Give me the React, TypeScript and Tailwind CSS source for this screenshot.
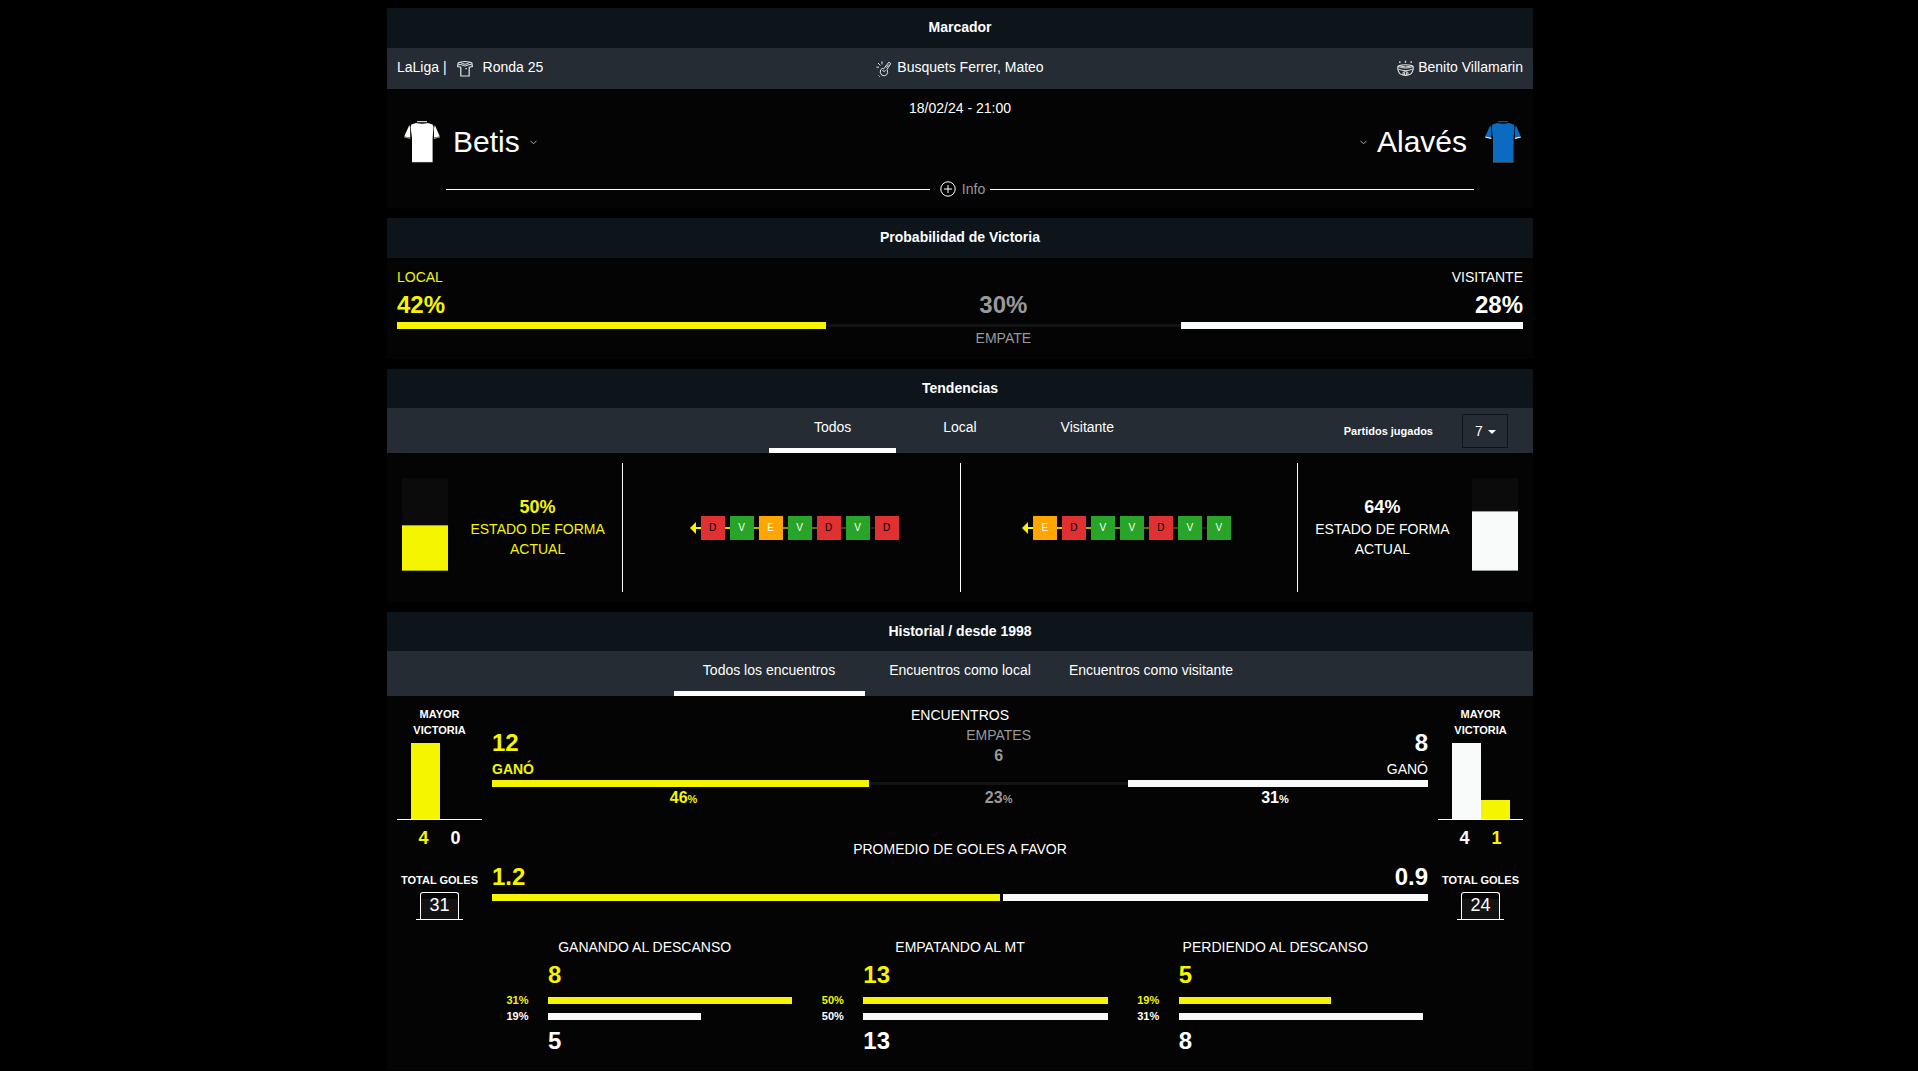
import { ReactNode, useState } from "react";

type Side = "home" | "away";

const homeForm = ["D", "V", "E", "V", "D", "V", "D"];
const awayForm = ["E", "D", "V", "V", "D", "V", "V"];

const formColors: Record<string, string> = {
    D: "bg-[#df3131] text-black",
    V: "bg-[#28a428] text-white",
    E: "bg-[#ffa500] text-white",
};

const halfTime = [
    { title: "GANANDO AL DESCANSO", home: 8, away: 5, homePct: 31, awayPct: 19 },
    { title: "EMPATANDO AL MT", home: 13, away: 13, homePct: 50, awayPct: 50 },
    { title: "PERDIENDO AL DESCANSO", home: 5, away: 8, homePct: 19, awayPct: 31 },
];

function Section({ title, tabs, children }: { title: string; tabs?: ReactNode; children: ReactNode }) {
    return (
        <section className="bg-[#040404]">
            <h2
                className={`bg-[#0d151b] pt-2.5 text-center text-sm leading-[18px] font-bold ${
                    tabs ? "pb-[11px]" : "pb-3"
                }`}
            >
                {title}
            </h2>
            {tabs ? <div className="relative bg-[#252c33]">{tabs}</div> : null}
            {children}
        </section>
    );
}

function Tabs({ items, width }: { items: string[]; width: string }) {
    const [active, setActive] = useState(items[0]);
    return (
        <div className={`mx-auto grid grid-cols-3 ${width}`}>
            {items.map((item) => (
                <button
                    key={item}
                    type="button"
                    onClick={() => setActive(item)}
                    className={`border-b-5 pt-2.5 pb-3 text-center text-sm leading-[18px] ${
                        active === item ? "border-white" : "border-transparent"
                    }`}
                >
                    {item}
                </button>
            ))}
        </div>
    );
}

function Shirt({ color, trim }: { color: string; trim: string }) {
    return (
        <svg width="36" height="42" viewBox="0 0 36 42" fill={color} aria-hidden="true">
            <path d="M7.4 3.4 L12 2 Q18 3.6 24 2 L28.6 3.4 L29.6 6 L28.6 17 V41 H8 V17 L6.6 6 Z" />
            <path d="M5.4 4 L0.2 15.6 L6.2 16.6 L6.2 8 Z" />
            <path d="M30.8 4 L35.8 15.6 L30 16.6 L30 8 Z" />
            <path d="M0.2 16 L6.4 17.4 M35.8 16 L29.8 17.4" stroke={trim} strokeWidth="1.2" />
            <path d="M13 0.7 H23" stroke={color} strokeWidth="1" />
            <path d="M8 41.4 H28.6" stroke="#777" strokeWidth="0.6" />
        </svg>
    );
}

function Chevron() {
    return (
        <svg width="7" height="5" viewBox="0 0 7 5" fill="none" stroke="#aaa" aria-hidden="true">
            <path d="M0.5 0.8 L3.5 3.8 L6.5 0.8" />
        </svg>
    );
}

function JerseyIcon() {
    return (
        <svg width="16" height="16" viewBox="0 0 16 16" fill="none" stroke="#e3e5e7" aria-hidden="true">
            <path d="M4 1 L1.2 2 L0.6 5.6 L3.8 6.2 V15 H12.2 V6.2 L15.4 5.6 L14.8 2 L12 1" strokeWidth="1.2" />
            <path d="M3.6 1.2 Q8 -0.4 12.4 1.2 M3.6 1.4 Q8 5 12.4 1.4 M1.4 3.6 H4 Q8 6.4 12 3.6 H14.6" />
            <path d="M8.4 7.6 H9.8" strokeWidth="1.4" />
        </svg>
    );
}

function WhistleIcon() {
    return (
        <svg width="16" height="16" viewBox="0 0 16 16" fill="none" stroke="#e3e5e7" strokeLinejoin="round" aria-hidden="true">
            <path d="M4.6 8.8 L6.2 7.4 L7.6 8 L12.8 1.2 L14.8 2.6 L11 8.4 Q12.6 11.6 10.6 13.8 Q8.4 15.6 5.8 14.2 Q3.4 12 4.6 8.8 Z" />
            <path d="M6.4 9.4 L8.4 10.6 L9.4 9.2 M10.4 6.6 L12.6 3.6" />
            <path d="M0.4 6.2 H3 M2 2 L4.4 4.4 M6 0.4 V3.4 M2.6 14.6 L3.6 15.6" />
        </svg>
    );
}

function StadiumIcon() {
    return (
        <svg width="17" height="17" viewBox="0 0 18 17" fill="none" stroke="#e3e5e7" aria-hidden="true">
            <path d="M1 6 Q9 3 17 6 M1 6 Q0.4 9.5 2 12.4 Q3 15.6 9 15.8 Q15 15.6 16 12.4 Q17.6 9.5 17 6" strokeWidth="1.2" />
            <path d="M1 6.4 Q9 9.6 17 6.4 M3.5 6 Q9 7.8 14.5 6 M1.4 9 Q9 12.6 16.6 9" />
            <path d="M6.4 15.4 V12.6 Q9 10.8 11.6 12.6 V15.4 M8 15.4 V12.6 M10 15.4 V12.6" />
            <path d="M3 0.8 V2.8 M9 0.4 V2.4 M15 0.8 V2.8" strokeWidth="1.4" />
        </svg>
    );
}

function PlusCircle() {
    return (
        <svg width="16" height="16" viewBox="0 0 16 16" fill="none" stroke="#fff" aria-hidden="true">
            <circle cx="8" cy="8" r="7.2" />
            <path d="M8 4 V12 M4 8 H12" />
        </svg>
    );
}

/* segment of a comparison bar: 15% minimum, the rest shared by value */
function Segment({ value, className = "", children }: { value: number; className?: string; children: ReactNode }) {
    return (
        <div className={`basis-[15%] ${className}`} style={{ flexGrow: value }}>
            {children}
        </div>
    );
}

function Figure({ children }: { children: ReactNode }) {
    return <p className="mt-[7px] mb-[5px] text-2xl leading-6 font-bold">{children}</p>;
}

function HomeBar() {
    return <div className="h-[7px] bg-[#f5f500]" />;
}

function AwayBar() {
    return <div className="h-[7px] bg-[#f9fbfb]" />;
}

function DrawBar() {
    return (
        <div className="h-[7px] py-0.5">
            <div className="h-[3px] bg-[#131313]" />
        </div>
    );
}

function Percent({ value, className = "" }: { value: number; className?: string }) {
    return (
        <p className={`mt-px text-center text-base leading-5 font-bold ${className}`}>
            {value}
            <span className="text-[11px]">%</span>
        </p>
    );
}

function FormGauge({ side, value }: { side: Side; value: number }) {
    const home = side === "home";
    return (
        <div
            className={`flex items-start gap-[5px] pt-[15px] ${
                home ? "pl-[5px] text-[#f5f500]" : "flex-row-reverse pr-[5px]"
            }`}
        >
            <div className="flex h-[93px] w-[46px] shrink-0 flex-col justify-end bg-[#0b0b0b]">
                <div
                    className={`border-y ${home ? "border-[#a8a800] bg-[#f5f500]" : "border-[#999] bg-[#f9fbfb]"}`}
                    style={{ height: `${value}%` }}
                />
            </div>
            <div className="flex flex-1 flex-col items-center pt-[19px] text-center">
                <p className="mb-0.5 text-lg leading-5 font-bold">{value}%</p>
                <p className="max-w-[140px] text-sm leading-5">ESTADO DE FORMA ACTUAL</p>
            </div>
        </div>
    );
}

function FormStreak({ results }: { results: string[] }) {
    return (
        <div className="flex items-center">
            <svg width="6" height="12" viewBox="0 0 6 12" fill="#f5f500" aria-hidden="true">
                <path d="M0 6 L6 0 V12 Z" />
            </svg>
            {results.map((r, i) => (
                <div key={i} className="flex items-center">
                    <div className="h-0.5 w-[5px] bg-[#f5f500]" style={{ opacity: 1 - i * 0.145 }} />
                    <div className={`flex size-6 items-center justify-center text-[10px] ${formColors[r]}`}>{r}</div>
                </div>
            ))}
        </div>
    );
}

function SideStats({ bars, goals }: { bars: { side: Side; value: number }[]; goals: number }) {
    const max = Math.max(...bars.map((b) => b.value));
    return (
        <div className="flex w-[85px] shrink-0 flex-col items-center text-center">
            <h3 className="w-16 text-[11px] leading-4 font-bold">MAYOR VICTORIA</h3>
            <div className="mt-[5px] flex h-[77px] w-full items-end justify-center border-b border-white">
                {bars.map((b) => (
                    <div
                        key={b.side}
                        className={`w-[29px] ${b.side === "home" ? "bg-[#f5f500]" : "bg-[#f9fbfb]"}`}
                        style={{ height: `${(b.value / max) * 100}%` }}
                    />
                ))}
            </div>
            <div className="mt-2 grid w-16 grid-cols-2 text-lg leading-5 font-bold">
                {bars.map((b) => (
                    <span key={b.side} className={b.side === "home" ? "text-[#f5f500]" : ""}>
                        {b.value}
                    </span>
                ))}
            </div>
            <h3 className="mt-6 text-[11px] leading-4 font-bold whitespace-nowrap">TOTAL GOLES</h3>
            <div className="mt-1 border-b border-white px-1">
                <p className="w-[39px] rounded-t-[3px] border border-b-0 border-white bg-linear-to-b from-[#040404] from-25% to-[#131313] to-25% pt-0.5 pb-1 text-lg leading-5">
                    {goals}
                </p>
            </div>
        </div>
    );
}

function HalfTimeRow({ side, pct, ratio }: { side: Side; pct: number; ratio: number }) {
    const home = side === "home";
    return (
        <div className="flex h-4 items-center gap-2.5">
            <span className={`w-[41px] text-center text-[11px] leading-4 font-bold ${home ? "text-[#f5f500]" : ""}`}>
                {pct}%
            </span>
            <div className="flex-1">
                <div style={{ width: `${ratio * 100}%` }}>{home ? <HomeBar /> : <AwayBar />}</div>
            </div>
        </div>
    );
}

export default function App() {
    return (
        <div className="min-h-screen bg-black pt-2 pb-[3px] pl-0.5 font-['Liberation_Sans',Arial,sans-serif] text-white">
            <main className="mx-auto flex max-w-[1146px] flex-col gap-2.5">
                <Section title="Marcador">
                    <div className="grid grid-cols-3 bg-[#252c33] px-2.5 pt-2.5 pb-3 text-sm leading-[18px]">
                        <div className="flex gap-2.5">
                            <span>LaLiga |</span>
                            <span className="pt-[3px]"><JerseyIcon /></span>
                            <span>Ronda 25</span>
                        </div>
                        <div className="flex justify-center gap-[5px]">
                            <span className="pt-[3px]"><WhistleIcon /></span>
                            <span>Busquets Ferrer, Mateo</span>
                        </div>
                        <div className="flex justify-end gap-1">
                            <span className="pt-0.5"><StadiumIcon /></span>
                            <span>Benito Villamarin</span>
                        </div>
                    </div>
                    <div className="py-2.5">
                        <p className="text-center text-sm leading-[18px]">18/02/24 - 21:00</p>
                        <div className="mt-1 flex items-center justify-between pr-3 pl-[17px] text-3xl leading-9">
                            <button type="button" className="flex items-center">
                                <Shirt color="#fff" trim="#86a95a" />
                                <span className="mr-2.5 ml-[13px]">Betis</span>
                                <Chevron />
                            </button>
                            <button type="button" className="flex items-center">
                                <Chevron />
                                <span className="mr-[18px] ml-2.5">Alavés</span>
                                <Shirt color="#0a6bc0" trim="#fff" />
                            </button>
                        </div>
                        <div className="mt-[17px] flex items-center px-[59px]">
                            <div className="h-px flex-1 bg-white" />
                            <button type="button" className="flex items-center gap-1.5 pr-[5px] pl-2.5 text-sm leading-[18px] text-[#999]">
                                <PlusCircle />
                                Info
                            </button>
                            <div className="h-px flex-1 bg-white" />
                        </div>
                    </div>
                </Section>

                <Section title="Probabilidad de Victoria">
                    <div className="flex items-end px-2.5 pt-2.5 pb-3 text-sm leading-[18px]">
                        <Segment value={42} className="pb-[18px] text-[#f5f500]">
                            <p>LOCAL</p>
                            <Figure>42%</Figure>
                            <HomeBar />
                        </Segment>
                        <Segment value={30} className="text-center text-[#999]">
                            <Figure>30%</Figure>
                            <DrawBar />
                            <p>EMPATE</p>
                        </Segment>
                        <Segment value={28} className="pb-[18px] text-right">
                            <p>VISITANTE</p>
                            <Figure>28%</Figure>
                            <AwayBar />
                        </Segment>
                    </div>
                </Section>

                <Section
                    title="Tendencias"
                    tabs={
                        <>
                            <Tabs items={["Todos", "Local", "Visitante"]} width="w-1/3" />
                            <div className="absolute inset-y-0 right-[25px] flex items-center gap-[29px]">
                                <label htmlFor="played" className="text-[11px] leading-4 font-bold">Partidos jugados</label>
                                <div className="relative">
                                    <select
                                        id="played"
                                        defaultValue="7"
                                        className="block h-[34px] w-[46px] appearance-none border border-[#0d151b] bg-transparent pl-3 text-sm"
                                    >
                                        <option>5</option>
                                        <option>7</option>
                                        <option>10</option>
                                    </select>
                                    <svg className="pointer-events-none absolute top-4 right-3" width="8" height="4" viewBox="0 0 8 4" fill="#fff" aria-hidden="true">
                                        <path d="M0 0 H8 L4 4 Z" />
                                    </svg>
                                </div>
                            </div>
                        </>
                    }
                >
                    <div className="grid grid-cols-[2fr_3fr_3fr_2fr] p-2.5">
                        <FormGauge side="home" value={50} />
                        <div className="flex h-[129px] items-center justify-center border-l border-white pl-[5px]">
                            <FormStreak results={homeForm} />
                        </div>
                        <div className="flex h-[129px] items-center justify-center border-x border-white pr-[5px]">
                            <FormStreak results={awayForm} />
                        </div>
                        <FormGauge side="away" value={64} />
                    </div>
                </Section>

                <Section
                    title="Historial / desde 1998"
                    tabs={
                        <Tabs
                            items={["Todos los encuentros", "Encuentros como local", "Encuentros como visitante"]}
                            width="w-1/2"
                        />
                    }
                >
                    <div className="flex gap-2.5 px-2.5 pt-2.5 pb-[17px]">
                        <SideStats bars={[{ side: "home", value: 4 }, { side: "away", value: 0 }]} goals={31} />

                        <div className="flex-1 text-sm leading-[18px]">
                            <h3 className="text-center">ENCUENTROS</h3>
                            <div className="flex items-end">
                                <Segment value={46} className="text-[#f5f500]">
                                    <Figure>12</Figure>
                                    <p className="mb-0.5 font-bold">GANÓ</p>
                                    <HomeBar />
                                    <Percent value={46} className="pl-1.5" />
                                </Segment>
                                <Segment value={23} className="text-center text-[#999]">
                                    <p>EMPATES</p>
                                    <p className="mt-0.5 mb-3.5 text-base leading-5 font-bold">6</p>
                                    <DrawBar />
                                    <Percent value={23} />
                                </Segment>
                                <Segment value={31} className="text-right">
                                    <Figure>8</Figure>
                                    <p className="mb-0.5">GANÓ</p>
                                    <AwayBar />
                                    <Percent value={31} className="pr-1.5" />
                                </Segment>
                            </div>

                            <h3 className="mt-[31px] text-center">PROMEDIO DE GOLES A FAVOR</h3>
                            <div className="flex gap-[3px]">
                                <Segment value={31} className="text-[#f5f500]">
                                    <Figure>1.2</Figure>
                                    <HomeBar />
                                </Segment>
                                <Segment value={24} className="text-right">
                                    <Figure>0.9</Figure>
                                    <AwayBar />
                                </Segment>
                            </div>

                            <div className="mt-[37px] grid grid-cols-3 gap-2.5">
                                {halfTime.map((h) => {
                                    const max = Math.max(h.home, h.away);
                                    return (
                                        <div key={h.title} className="px-[5px]">
                                            <h3 className="text-center">{h.title}</h3>
                                            <div className="pl-[51px] text-[#f5f500]">
                                                <Figure>{h.home}</Figure>
                                            </div>
                                            <HalfTimeRow side="home" pct={h.homePct} ratio={h.home / max} />
                                            <HalfTimeRow side="away" pct={h.awayPct} ratio={h.away / max} />
                                            <p className="mt-[5px] pl-[51px] text-2xl leading-6 font-bold">{h.away}</p>
                                        </div>
                                    );
                                })}
                            </div>
                        </div>

                        <SideStats bars={[{ side: "away", value: 4 }, { side: "home", value: 1 }]} goals={24} />
                    </div>
                </Section>
            </main>
        </div>
    );
}
